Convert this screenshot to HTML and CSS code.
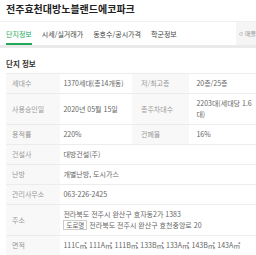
FILE: index.html
```html
<!DOCTYPE html>
<html lang="ko">
<head>
  <meta charset="UTF-8">
  <meta name="viewport" content="width=device-width, initial-scale=1.0">
  <title>전주효천대방노블랜드에코파크</title>
  <link rel="stylesheet" href="styles.css">
</head>
<body>
  <h1 class="titulo">전주효천대방노블랜드에코파크</h1>

  <div class="tabs">
    <a class="tab activo">단지정보</a>
    <a class="tab">시세/실거래가</a>
    <a class="tab">동호수/공시가격</a>
    <a class="tab">학군정보</a>
    <div class="tab-extra">
      <svg width="6" height="6" viewBox="0 0 10 10"><path d="M8.5 5a3.5 3.5 0 1 1-1-2.5" fill="none" stroke="#999" stroke-width="1.2"/><path d="M8.6 0.8v2.4h-2.4" fill="none" stroke="#999" stroke-width="1.2"/></svg>
      <span>매물</span>
    </div>
  </div>
  <div class="separador"></div>

  <div class="seccion">
    <h2>단지 정보</h2>
    <table class="info">
      <tr>
        <th>세대수</th><td>1370세대(총14개동)</td>
        <th class="th2">저/최고층</th><td class="td2">20층/25층</td>
      </tr>
      <tr>
        <th>사용승인일</th><td>2020년 05월 15일</td>
        <th class="th2">총주차대수</th><td class="td2">2203대(세대당 1.6 대)</td>
      </tr>
      <tr>
        <th>용적률</th><td>220%</td>
        <th class="th2">건폐율</th><td class="td2">16%</td>
      </tr>
      <tr>
        <th>건설사</th><td colspan="3">대방건설(주)</td>
      </tr>
      <tr>
        <th>난방</th><td colspan="3">개별난방, 도시가스</td>
      </tr>
      <tr>
        <th>관리사무소</th><td colspan="3">063-226-2425</td>
      </tr>
      <tr>
        <th>주소</th>
        <td colspan="3">전라북도 전주시 완산구 효자동2가 1383<br><span class="badge">도로명</span> 전라북도 전주시 완산구 효천중앙로 20</td>
      </tr>
      <tr>
        <th>면적</th><td colspan="3">111C<span class="m2">㎡</span>, 111A<span class="m2">㎡</span>, 111B<span class="m2">㎡</span>, 133B<span class="m2">㎡</span>, 133A<span class="m2">㎡</span>, 143B<span class="m2">㎡</span>, 143A<span class="m2">㎡</span></td>
      </tr>
    </table>
  </div>
</body>
</html>
```

FILE: styles.css
```css
body {
  font-family: "Noto Sans CJK KR", "Noto Sans", sans-serif;
  margin: 0;
  padding: 0;
  background-color: #fff;
  color: #333;
  overflow: hidden;
}
.titulo {
  font-size: 10px;
  font-weight: bold;
  color: #222;
  margin: 0;
  padding: 2px 6px 0;
  height: 19px;
  line-height: 14px;
}
.tabs {
  display: flex;
  align-items: stretch;
  height: 23px;
  border-top: 1px solid #f0f0f0;
  padding-left: 6px;
  gap: 10px;
}
.tab {
  font-size: 7px;
  color: #444;
  display: flex;
  align-items: center;
  border-bottom: 2px solid transparent;
  padding-top: 2px;
}
.tab.activo {
  color: #21a95b;
  border-bottom-color: #21a95b;
}
.tab-extra {
  margin-left: auto;
  background-color: #f5f5f5;
  width: 17px;
  padding-left: 3px;
  display: flex;
  align-items: center;
  gap: 2px;
  font-size: 6px;
  color: #999;
  overflow: hidden;
  white-space: nowrap;
}
.separador {
  height: 3px;
  background-color: #eaeaea;
}
.seccion {
  padding: 0 0 0 6px;
}
.seccion h2 {
  font-size: 7.5px;
  font-weight: bold;
  color: #333;
  margin: 0;
  padding-top: 10px;
  height: 15px;
  line-height: 12px;
}
.info {
  border-collapse: collapse;
  width: 260px;
  table-layout: fixed;
  font-size: 7px;
  line-height: 11px;
}
.info th,
.info td {
  border-top: 1px solid #ececec;
  border-bottom: 1px solid #ececec;
  padding: 4px 0;
  text-align: left;
  vertical-align: middle;
}
.info th {
  width: 48px;
  padding-left: 6px;
  background-color: #f8f8f8;
  color: #999;
  font-weight: normal;
}
.info td {
  width: 68px;
  padding-left: 3px;
  color: #666;
}
.info th.th2 {
  width: 48px;
  padding-left: 9px;
}
.info td.td2 {
  width: 63px;
  padding-left: 7px;
  padding-right: 6px;
}
.badge {
  display: inline-block;
  border: 1px solid #ccc;
  padding: 0 2px;
  line-height: 8px;
  font-size: 6.5px;
  color: #666;
}
.m2 {
  letter-spacing: -1.4px;
}
```
